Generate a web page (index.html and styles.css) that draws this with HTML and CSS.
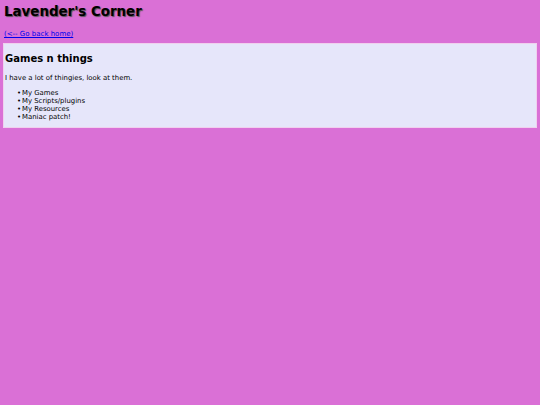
FILE: index.html
```html
<!DOCTYPE html>
<html>
<head>
<meta charset="utf-8">
<title>Lavender's Corner</title>
<link rel="stylesheet" href="styles.css">
</head>
<body>
<h1 class="title">Lavender's Corner</h1>
<a class="back" href="#">(&lt;-- Go back home)</a>
<div class="box">
<h2 class="heading">Games n things</h2>
<p class="intro">I have a lot of thingies, look at them.</p>
<ul class="list">
<li>My Games</li>
<li>My Scripts/plugins</li>
<li>My Resources</li>
<li>Maniac patch!</li>
</ul>
</div>
</body>
</html>
```
FILE: styles.css
```css
html, body {
  margin: 0;
  padding: 0;
}
body {
  background: #da70d6;
  font-family: "DejaVu Sans", Verdana, sans-serif;
  font-size: 6.9px;
  color: #000;
  padding: 3px 3px;
}
.title {
  margin: 0 0 0 1px;
  font-size: 13.4px;
  font-weight: bold;
  line-height: 18px;
  text-shadow: 1px 1px 1px #555;
}
.back {
  display: inline-block;
  margin: 9px 0 0 1px;
  color: #0000ee;
  font-size: 7px;
}
.box {
  margin-top: 5px;
  background: #e6e6fa;
  border: 1px solid #f0d0ee;
  padding: 1px 0 6px 1px;
}
.heading {
  margin: 8px 0 9px 0;
  font-size: 10px;
  line-height: 12px;
  font-weight: bold;
}
.intro {
  margin: 0 0 7px 0;
  line-height: 8px;
}
.list {
  margin: 0;
  padding-left: 17px;
  list-style: none;
}
.list li {
  line-height: 8px;
}
.list li::before {
  content: "\2022";
  display: inline-block;
  width: 5px;
  margin-left: -5px;
}
```
